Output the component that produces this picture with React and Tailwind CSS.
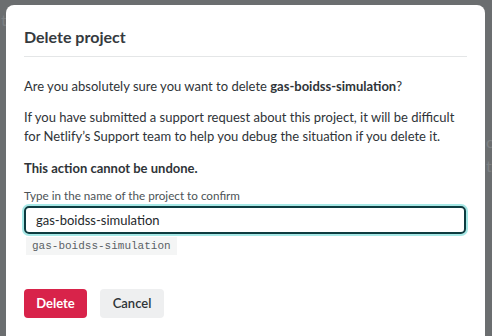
export default function App() {
  return (
    <div className="relative w-[492px] h-[336px] overflow-hidden bg-[#6b6e70] font-['Lato','Noto_Sans',sans-serif] text-[#2f3438]">
      {/* faint page behind the overlay */}
      <div className="absolute left-[1px] top-[8px] text-[16px] text-[#7d8183]">t</div>
      <div className="absolute left-[486px] top-[130px] text-[16px] leading-[24px] text-[#7d8183]">
        <div>o</div>
        <div>t</div>
      </div>

      {/* dialog */}
      <div className="relative ml-[6px] mt-[5px] flex h-[340px] w-[479px] flex-col rounded-lg bg-white px-[18px] pt-[20px]">
        <h2 className="text-[16px] font-bold leading-[24px] text-[#353a3e]">Delete project</h2>
        <div className="mt-[7px] h-px bg-[#e4e6e7]" />

        <div className="mt-[20px] flex flex-col gap-[12px] text-[13px] leading-[19px]">
          <p>
            Are you absolutely sure you want to delete <b className="font-bold">gas-boidss-simulation</b>?
          </p>
          <p>
            If you have submitted a support request about this project, it will be difficult for Netlify’s Support team to help you debug the situation if you delete it.
          </p>
          <p className="mt-[1px] font-bold">This action cannot be undone.</p>
        </div>

        <label className="mt-[9px] block text-[11.7px] leading-[16px] text-[#4c5357]">
          Type in the name of the project to confirm
        </label>
        <div className="mt-[3px] h-[28px] w-[442px] rounded-[5px] border-2 border-[#0d3c40] px-[10px] text-[13px] leading-[24px] text-[#24292c] shadow-[0_0_0_2px_#a5e8e6]">
          gas-boidss-simulation
        </div>
        <div className="mt-[3px] ml-[2px] self-start bg-[#f4f5f5] px-[6px] py-[2px] font-['Liberation_Mono',monospace] text-[11px] leading-[14px] text-[#5a6165]">
          gas-boidss-simulation
        </div>

        <div className="mt-[34px] flex gap-[13px]">
          <button className="h-[29px] w-[63px] rounded-[4px] bg-[#d8234a] text-[13px] font-bold text-white">Delete</button>
          <button className="h-[29px] w-[64px] rounded-[4px] bg-[#eeeff0] text-[13px] font-semibold text-[#2f3438]">Cancel</button>
        </div>
      </div>
    </div>
  );
}
